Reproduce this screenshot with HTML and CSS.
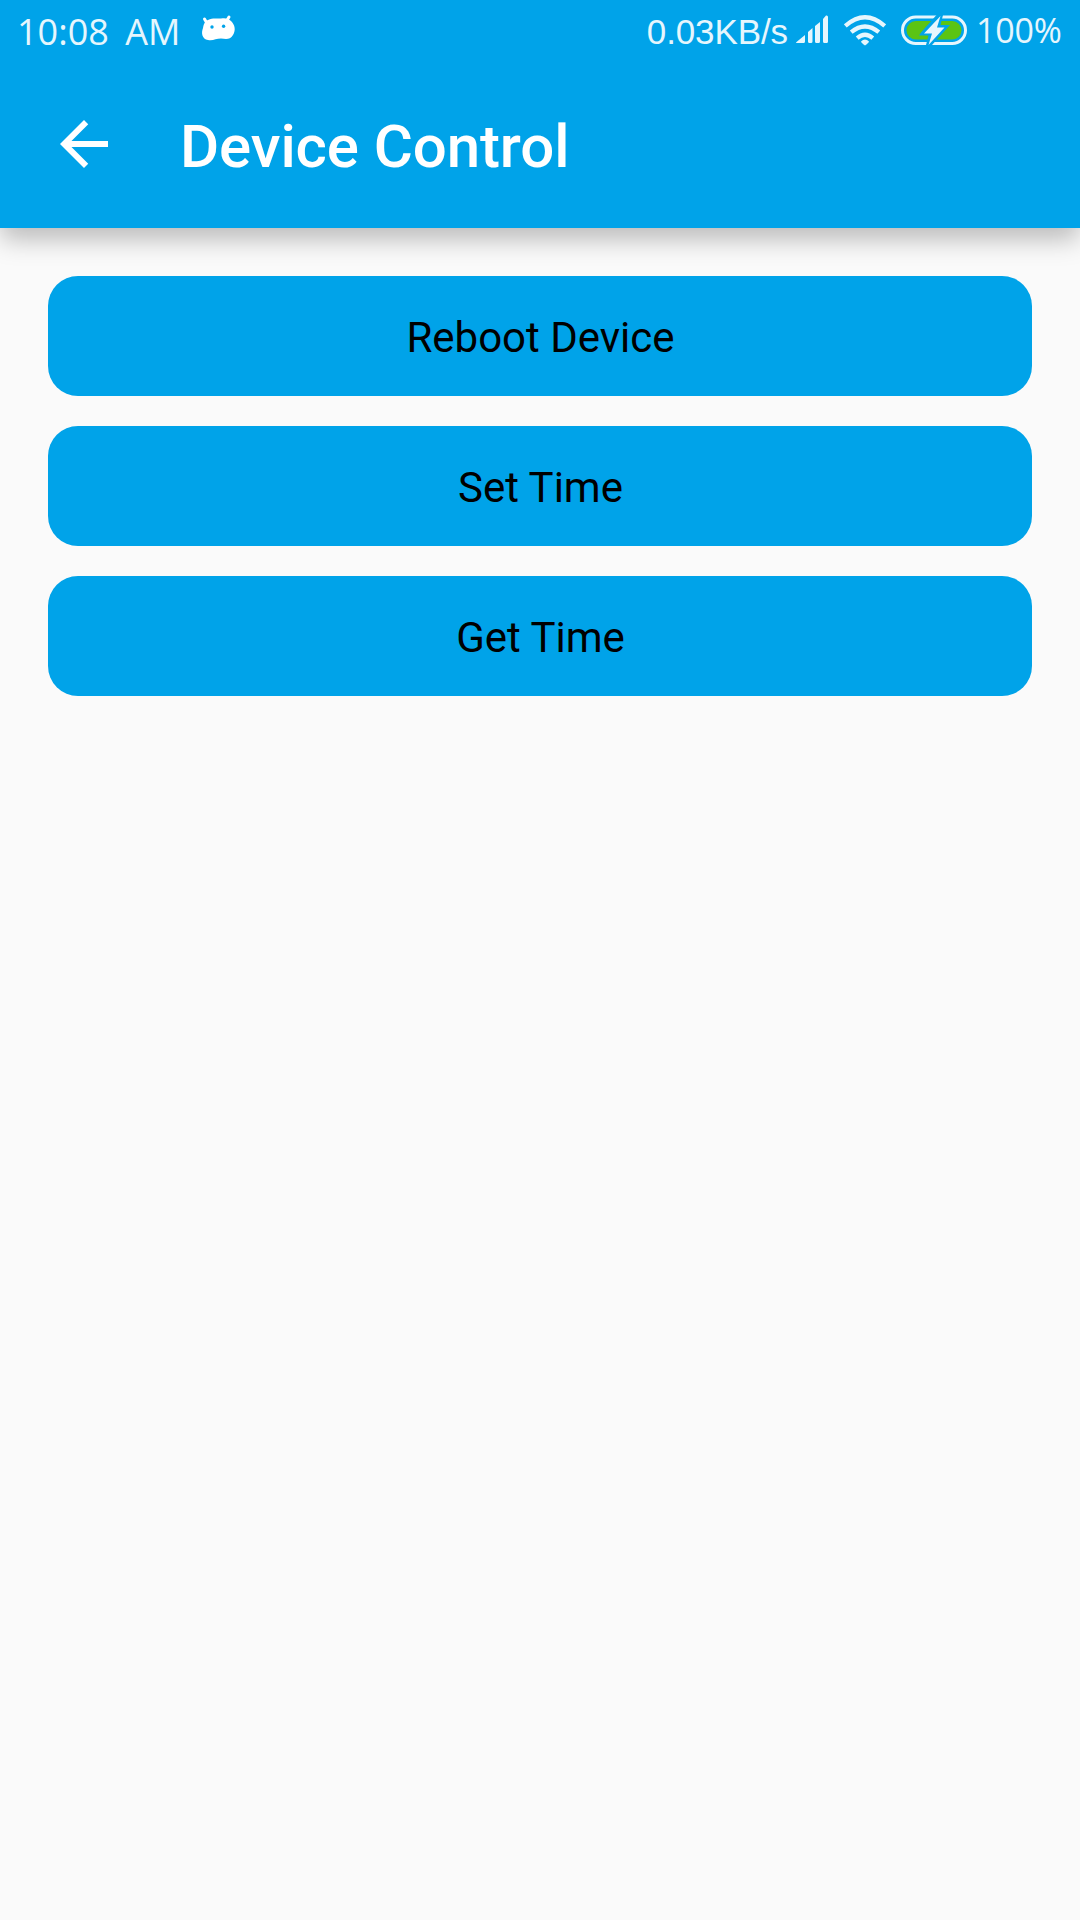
FILE: index.html
```html
<!DOCTYPE html>
<html lang="en">
<head>
<meta charset="utf-8">
<title>Device Control</title>
<link rel="stylesheet" href="styles.css">
</head>
<body>
<header class="header">
  <div class="status">
    <span class="clock">10:08 AM</span>
    <svg class="robot" width="36" height="28" viewBox="0 0 36 28">
      <path d="M3.500 5l3 5M28 3l-3 5" stroke="#fff" stroke-width="3" stroke-linecap="round"/>
      <path fill="#fff" d="M7 6C12 3.500 16 5 20 4.500C25 4 27 4.500 30 7C34 11 35 16 32 21C29 26 25 25 20 24.500C15 24.500 12 27 7 26C1 25 0 19 2 14C3 9 4 7.500 7 6Z"/>
      <circle cx="11" cy="13" r="1.700" fill="#00a3e9"/><circle cx="22.600" cy="12.300" r="1.700" fill="#00a3e9"/>
    </svg>
    <span class="speed">0.03KB/s</span>
    <svg class="signal" width="32" height="29" viewBox="0 0 32 29" fill="#e6f6fd">
      <path d="M.5 27L9 20V26.500Q9 28 7.500 28H1Q-.5 28 .5 27ZM12 17L16.500 13V26.500Q16.500 28 15 28H13.500Q12 28 12 26.500ZM19 11L24 7V26.500Q24 28 22.500 28H20.500Q19 28 19 26.500ZM27 4L30 .5Q32 0 32 2V26.500Q32 28 30.500 28H28.500Q27 28 27 26.500Z"/>
    </svg>
    <svg class="wifi" width="42" height="31" viewBox="0 0 42 31" fill="none" stroke="#e6f6fd">
      <path stroke-width="4.300" d="M1.300 11Q21-6.300 40.700 11M7.200 17.200Q21 5.700 34.800 17.200M13.200 23.200Q21 16.500 28.800 23.200"/>
      <path fill="#e6f6fd" stroke="none" d="M17 26.500Q21 22.500 25 26.500Q25 27.500 21 30.500Q17 27.500 17 26.500Z"/>
    </svg>
    <svg class="battery" width="66" height="30" viewBox="0 0 66 30">
      <rect x="1.500" y="2" width="63" height="26.500" rx="13.250" fill="none" stroke="#e6f6fd" stroke-width="3"/>
      <rect x="5.500" y="6" width="55" height="18.500" rx="9.250" fill="#5bc414"/>
      <path fill="#00a3e9" d="M35.500 0H42L39.500 10H49L31 30H25L27.500 20.500H18L20 17.500Z"/>
      <path fill="#e6f6fd" d="M39.500 1L23 18.500H31L27.500 30L43.500 12.500H36Z"/>
    </svg>
    <span class="percent">100%</span>
  </div>
  <div class="toolbar">
    <svg class="back" width="72" height="72" viewBox="0 0 24 24" fill="#fff"><path d="M20 11H7.830l5.590-5.590L12 4l-8 8 8 8 1.410-1.410L7.830 13H20v-2z"/></svg>
    <h1 class="title">Device Control</h1>
  </div>
</header>
<main class="actions">
  <button class="action">Reboot Device</button>
  <button class="action">Set Time</button>
  <button class="action">Get Time</button>
</main>
</body>
</html>
```
FILE: styles.css
```css
* { box-sizing: border-box; }
body {
  margin: 0;
  min-height: 1920px;
  background: #fafafa;
  font-family: Roboto, sans-serif;
  overflow: hidden;
}
.header {
  height: 228px;
  background: #00a3e9;
  box-shadow: 0 12px 24px -1px rgba(0, 0, 0, .26);
}
.status {
  height: 60px;
  display: flex;
  align-items: flex-start;
  padding: 0 16px 0 17px;
  color: #e6f6fd;
  white-space: nowrap;
}
.clock {
  width: 184px;
  font: 36px/60px "Open Sans", sans-serif;
  word-spacing: 7px;
  padding-top: 2px;
}
.robot { margin-top: 14px; }
.speed {
  margin-left: auto;
  font: 35px/63px "Liberation Sans", sans-serif;
  letter-spacing: -.1px;
}
.signal { margin: 15px 0 0 8px; }
.wifi { margin: 15px 0 0 16px; }
.battery { margin: 15px 0 0 15px; }
.percent {
  width: 88px;
  margin-left: 9px;
  font: 34px/60px "Open Sans", sans-serif;
  letter-spacing: -.2px;
}
.toolbar {
  height: 168px;
  display: flex;
  align-items: center;
  padding-left: 48px;
}
.title {
  margin: 6px 0 0 60px;
  font-size: 60px;
  line-height: 70px;
  font-weight: 500;
  letter-spacing: -.1px;
  color: #fff;
}
.actions {
  display: flex;
  flex-direction: column;
  gap: 30px;
  padding: 48px;
}
.action {
  height: 120px;
  border: 0;
  border-radius: 30px;
  padding: 4px 0 0 1px;
  background: #00a3e9;
  color: #000;
  font: 42px/50px Roboto, sans-serif;
}
```
